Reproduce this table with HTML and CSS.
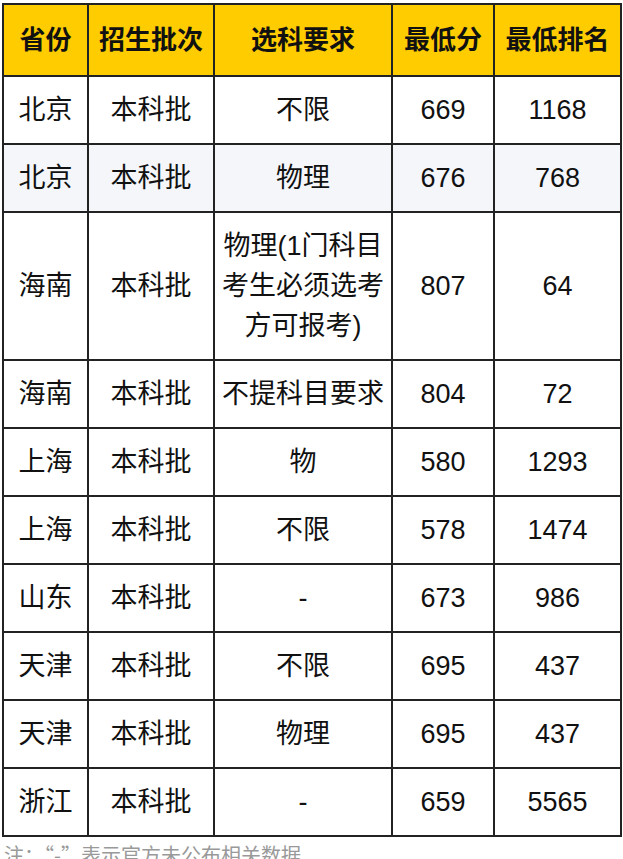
FILE: index.html
```html
<!DOCTYPE html>
<html lang="zh-CN">
<head>
<meta charset="utf-8">
<title>录取分数</title>
<link rel="stylesheet" href="styles.css">
</head>
<body>
<table class="score-table">
  <colgroup>
    <col class="c1"><col class="c2"><col class="c3"><col class="c4"><col class="c5">
  </colgroup>
  <thead>
    <tr><th>省份</th><th>招生批次</th><th>选科要求</th><th>最低分</th><th>最低排名</th></tr>
  </thead>
  <tbody>
    <tr><td>北京</td><td>本科批</td><td>不限</td><td>669</td><td>1168</td></tr>
    <tr class="alt"><td>北京</td><td>本科批</td><td>物理</td><td>676</td><td>768</td></tr>
    <tr><td>海南</td><td>本科批</td><td>物理(1门科目考生必须选考方可报考)</td><td>807</td><td>64</td></tr>
    <tr><td>海南</td><td>本科批</td><td>不提科目要求</td><td>804</td><td>72</td></tr>
    <tr><td>上海</td><td>本科批</td><td>物</td><td>580</td><td>1293</td></tr>
    <tr><td>上海</td><td>本科批</td><td>不限</td><td>578</td><td>1474</td></tr>
    <tr><td>山东</td><td>本科批</td><td>-</td><td>673</td><td>986</td></tr>
    <tr><td>天津</td><td>本科批</td><td>不限</td><td>695</td><td>437</td></tr>
    <tr><td>天津</td><td>本科批</td><td>物理</td><td>695</td><td>437</td></tr>
    <tr><td>浙江</td><td>本科批</td><td>-</td><td>659</td><td>5565</td></tr>
  </tbody>
</table>
<p class="note">注：“-”表示官方未公布相关数据</p>
</body>
</html>
```
FILE: styles.css
```css
html, body {
  margin: 0;
  padding: 0;
  background: #fff;
}
body {
  padding: 3px 3px 0 2px;
  font-family: "Liberation Sans", "Noto Sans CJK SC", sans-serif;
  color: #111;
}
.score-table {
  border-collapse: collapse;
  table-layout: fixed;
  width: 618px;
  font-size: 27px;
}
.c1 { width: 85px; }
.c2 { width: 126px; }
.c3 { width: 178px; }
.c4 { width: 102px; }
.c5 { width: 127px; }
.score-table th,
.score-table td {
  border: 2px solid #222;
  text-align: center;
  vertical-align: middle;
  line-height: 40px;
  padding: 13px 5px;
  word-break: break-all;
}
.score-table th {
  background: #ffcc00;
  font-weight: bold;
  font-size: 26px;
  padding: 15px 3px;
  color: #111;
}
.score-table tr.alt td {
  background: #f4f6fa;
}
.note {
  margin: 6px 0 0 2px;
  font-family: "Noto Sans CJK SC", sans-serif;
  font-size: 20px;
  line-height: 24px;
  color: #999;
}
```
